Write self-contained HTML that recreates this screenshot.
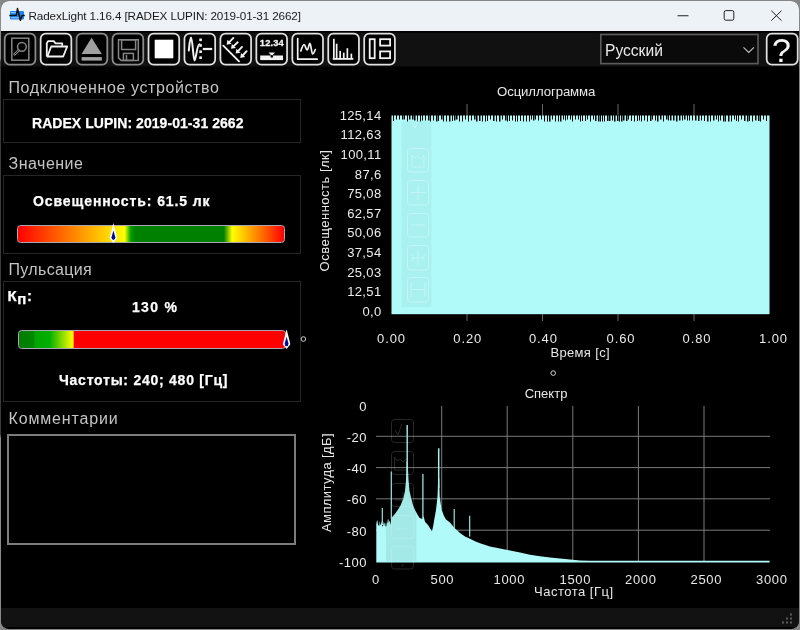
<!DOCTYPE html>
<html><head><meta charset="utf-8">
<style>
html,body{margin:0;padding:0;width:800px;height:630px;overflow:hidden;}
body{background:#858585;}
body{position:relative;font-family:"Liberation Sans",sans-serif;}
.abs{position:absolute;}
#win{position:absolute;left:1px;top:1px;width:798px;height:628px;border-radius:8px;overflow:hidden;background:#000;}
#title{position:absolute;left:0;top:0;width:798px;height:30px;background:#edf2f7;}
.t{position:absolute;white-space:nowrap;line-height:1;}
.hdr{color:#c4c4c4;font-size:16px;}
.bold{color:#fff;font-weight:bold;font-size:14px;-webkit-text-stroke:0.25px #fff;}
.box{position:absolute;border:1px solid #262626;}
.lbl{color:#e6e6e6;font-size:13px;}
.clbl{color:#e8e8e8;font-size:13px;}
</style></head><body>
<div id="root" style="position:absolute;left:0;top:0;width:800px;height:630px;will-change:transform;">
<div class="abs" style="left:0;top:0;width:1px;height:630px;background:linear-gradient(to bottom,#8a8a8a 0px,#8a8a8a 58px,#3a3a3a 62px,#3a3a3a 434px,#8a8a8a 438px,#8a8a8a 630px);"></div>
<div id="win">
  <div id="title"></div>
  <div class="abs" style="left:0;top:606.5px;width:798px;height:19.5px;background:#121212;"></div>
</div>

<!-- title bar content -->
<svg class="abs" style="left:0;top:0" width="800" height="32">
  <!-- app icon -->
  <rect x="10" y="11" width="14" height="8.4" rx="1.2" fill="#1a84f2"/>
  <rect x="11" y="12" width="5" height="1.2" fill="#9fd0ff" opacity="0.8"/>
  <rect x="11" y="17.2" width="9" height="1.2" fill="#9fd0ff" opacity="0.8"/>
  <polyline points="9.3,15.4 16.4,15.2 17.5,8.6 20.4,20.2 22.1,15.4 24.8,15.4" fill="none" stroke="#111" stroke-width="1.5" stroke-linejoin="round"/>
  <!-- min / max / close -->
  <line x1="677.5" y1="15.75" x2="688.5" y2="15.75" stroke="#222" stroke-width="1"/>
  <rect x="724.2" y="10.6" width="9.6" height="9.6" rx="1.6" fill="none" stroke="#222" stroke-width="1"/>
  <path d="M771.3 10.7 L781.5 20.6 M781.5 10.7 L771.3 20.6" stroke="#222" stroke-width="1"/>
</svg>
<div class="t" style="left:28.5px;top:9.8px;font-size:11.7px;color:#1a1a1a;letter-spacing:-0.12px">RadexLight 1.16.4 [RADEX LUPIN: 2019-01-31 2662]</div>

<!-- toolbar -->
<svg class="abs" style="left:0;top:0" width="800" height="70">
  <rect x="1" y="32.8" width="798" height="33.7" fill="#111"/>
  <g fill="#000" stroke-width="1.75">
    <rect x="4.70" y="33.7" width="30.7" height="30.9" rx="5" stroke="#8c8c8c"/>
    <rect x="40.65" y="33.7" width="30.7" height="30.9" rx="5" stroke="#e0e0e0"/>
    <rect x="76.60" y="33.7" width="30.7" height="30.9" rx="5" stroke="#8c8c8c"/>
    <rect x="112.55" y="33.7" width="30.7" height="30.9" rx="5" stroke="#8c8c8c"/>
    <rect x="148.50" y="33.7" width="30.7" height="30.9" rx="5" stroke="#e0e0e0"/>
    <rect x="184.45" y="33.7" width="30.7" height="30.9" rx="5" stroke="#e0e0e0"/>
    <rect x="220.40" y="33.7" width="30.7" height="30.9" rx="5" stroke="#e0e0e0"/>
    <rect x="256.35" y="33.7" width="30.7" height="30.9" rx="5" stroke="#e0e0e0"/>
    <rect x="292.30" y="33.7" width="30.7" height="30.9" rx="5" stroke="#e0e0e0"/>
    <rect x="328.25" y="33.7" width="30.7" height="30.9" rx="5" stroke="#e0e0e0"/>
    <rect x="364.20" y="33.7" width="30.7" height="30.9" rx="5" stroke="#e0e0e0"/>
  </g>
  <!-- search doc -->
  <g fill="none" stroke="#858585" stroke-width="1.5">
    <rect x="11.8" y="38.2" width="17" height="22"/>
    <circle cx="21.9" cy="46.8" r="4.4"/>
    <line x1="18.6" y1="50.3" x2="14.6" y2="54.3" stroke-width="2.6" stroke-linecap="round"/>
    <line x1="18.6" y1="50.3" x2="14.6" y2="54.3" stroke-width="0.8" stroke="#000"/>
  </g>
  <!-- folder -->
  <g fill="none" stroke="#f2f2f2" stroke-width="1.8" stroke-linejoin="round">
    <path d="M46.8 56.6 V43.2 L48.2 41.1 H53.8 L55.4 43.3 H62.2 V45.8"/>
    <path d="M47.4 56.5 L51.2 46.5 H67.2 L63.2 56.5 Z"/>
  </g>
  <!-- eject -->
  <g fill="#a0a0a0">
    <path d="M91.6 37.8 L101.8 54 H81.5 Z"/>
    <rect x="81.6" y="57.1" width="20.2" height="3.5"/>
  </g>
  <!-- save -->
  <g fill="none" stroke="#858585" stroke-width="1.5">
    <path d="M118.5 39.8 H138.3 V60.4 H121 L118.5 57.9 Z"/>
    <rect x="121.6" y="39.8" width="14" height="9.7"/>
    <rect x="123.4" y="53.4" width="10" height="7"/>
    <line x1="126.5" y1="55" x2="126.5" y2="60"/>
  </g>
  <!-- stop -->
  <rect x="154.7" y="39.7" width="18.6" height="18.6" fill="#fff"/>
  <!-- wave -->
  <g fill="none" stroke="#f2f2f2" stroke-width="2" stroke-linecap="round" stroke-linejoin="round">
    <path d="M188.8 50.5 C189.5 44 190 37.5 191 37.5 C192.5 37.5 193.3 60.5 194.5 60.5 C196 60.5 197 44 199.5 44.2"/>
  </g>
  <g fill="#f2f2f2">
    <rect x="199.3" y="38.5" width="2.6" height="2.6"/>
    <rect x="199.3" y="44.2" width="2.6" height="2.6"/>
    <rect x="199.3" y="50.4" width="2.6" height="2.6"/>
    <rect x="199.3" y="56.4" width="2.6" height="2.6"/>
    <rect x="202.8" y="47.9" width="9.4" height="2.2"/>
  </g>
  <!-- arrows -->
  <g stroke="#f2f2f2" stroke-width="1.9" fill="none" stroke-linecap="round">
    <line x1="223.3" y1="45.7" x2="239" y2="61.3"/>
    <line x1="233.4" y1="37.9" x2="229.50" y2="41.80"/><line x1="237.7" y1="42.3" x2="233.90" y2="45.90"/><line x1="242" y1="46.9" x2="238.50" y2="50.70"/><line x1="246.6" y1="51.2" x2="243.10" y2="55.00"/>
  </g>
  <g fill="#f2f2f2"><path d="M226.6 44.7 L231.50 43.80 L227.50 39.80 Z"/><path d="M231 48.8 L235.90 47.90 L231.90 43.90 Z"/><path d="M235.6 53.6 L240.50 52.70 L236.50 48.70 Z"/><path d="M240.2 57.9 L245.10 57.00 L241.10 53.00 Z"/></g>
  <!-- 12.34 -->
  <text x="271.8" y="46.2" font-family="Liberation Sans" font-weight="bold" font-size="9.4" fill="#f2f2f2" stroke="#f2f2f2" stroke-width="0.3" text-anchor="middle" letter-spacing="0.1">12.34</text>
  <path d="M268.5 52.6 H275 L271.8 56 Z" fill="#f2f2f2"/>
  <rect x="260.2" y="55.5" width="22.8" height="4.6" fill="#f2f2f2"/>
  <circle cx="271.8" cy="56.4" r="1.3" fill="#0b0b0b"/>
  <!-- graph -->
  <g fill="none" stroke="#f2f2f2" stroke-width="1.7" stroke-linejoin="round" stroke-linecap="round">
    <path d="M297.7 38.6 V59.2 H317.2"/>
    <path d="M300.8 51 C302 47.5 303 44.6 304 44.6 C305.3 44.6 306 50 307.2 50 C308.4 50 308.9 43.3 309.9 43.3 C311 43.3 311.5 54 312.6 54 C313.7 54 314.5 51.5 315.3 49.6"/>
  </g>
  <!-- histogram -->
  <g fill="#f2f2f2">
    <rect x="332.8" y="58" width="20.5" height="1.8"/>
    <rect x="333" y="38.8" width="1.7" height="20"/>
    <rect x="335.8" y="43.7" width="1.7" height="15"/>
    <rect x="339.3" y="50.9" width="1.7" height="8"/>
    <rect x="342.9" y="52.7" width="1.7" height="6"/>
    <rect x="346.5" y="48.2" width="1.7" height="10"/>
    <rect x="350.5" y="53.6" width="1.7" height="5"/>
  </g>
  <!-- layout -->
  <g fill="none" stroke="#f2f2f2" stroke-width="1.8">
    <rect x="369.7" y="39.2" width="5" height="19"/>
    <rect x="380.1" y="39.2" width="10" height="6.4"/>
    <rect x="380.1" y="51.4" width="10" height="6.8"/>
  </g>
  <!-- language dropdown -->
  <rect x="600.8" y="34.5" width="157.2" height="29.1" fill="#0a0a0a" stroke="#5c5c5c" stroke-width="1.6"/>
  <path d="M743.5 47.3 L748.7 52.5 L753.9 47.3" fill="none" stroke="#bdbdbd" stroke-width="1.2"/>
  <!-- help -->
  <rect x="766.7" y="33.7" width="31" height="30.9" rx="5" fill="#000" stroke="#e0e0e0" stroke-width="1.75"/>
</svg>
<div class="t" style="left:605px;top:42.5px;font-size:15.6px;color:#eaeaea;">Русский</div>
<div class="t" style="left:772px;top:32.5px;font-size:34px;color:#f4f4f4;">?</div>

<!-- left panel -->
<div class="t hdr" style="left:8.5px;top:79.5px;letter-spacing:0.6px">Подключенное устройство</div>
<div class="box" style="left:3px;top:99px;width:296px;height:42px;"></div>
<div class="t bold" style="left:32px;top:115.5px;letter-spacing:0.05px">RADEX LUPIN: 2019-01-31 2662</div>

<div class="t hdr" style="left:8.5px;top:155.5px;letter-spacing:0.5px">Значение</div>
<div class="box" style="left:3px;top:175px;width:296px;height:77px;"></div>
<div class="t bold" style="left:33px;top:194px;letter-spacing:0.9px">Освещенность: 61.5 лк</div>
<div class="abs" style="left:17.3px;top:224.7px;width:266.2px;height:16px;border:1px solid #a9a6b6;border-radius:3.5px;background:linear-gradient(to right,#ff0000 0%,#ffff00 40.1%,#00a000 42.4%,#008000 44.2%,#008000 77.4%,#ffff00 80.5%,#ff0000 100%);"></div>


<div class="t hdr" style="left:8.5px;top:261.5px;letter-spacing:0.35px">Пульсация</div>
<div class="box" style="left:3px;top:281px;width:296px;height:119px;"></div>
<div class="t bold" style="left:7.5px;top:287.5px;font-size:15px;letter-spacing:0.6px">К<span style="position:relative;top:3px">п</span>:</div>
<div class="t bold" style="left:132px;top:299.5px;letter-spacing:1.3px">130 %</div>
<div class="abs" style="left:17.5px;top:330px;width:266px;height:17px;border:1px solid #a9a6b6;border-radius:3.5px;background:linear-gradient(to right,#007a00 0%,#008800 5.5%,#00a400 6%,#00b000 11.5%,#ffff00 20.3%,#ff0000 20.8%,#ff0000 100%);"></div>
<div class="t bold" style="left:59px;top:372.5px;letter-spacing:0.75px">Частоты: 240; 480 [Гц]</div>

<div class="t hdr" style="left:8.5px;top:410.5px;letter-spacing:0.85px">Комментарии</div>
<div class="abs" style="left:7.3px;top:434.3px;width:285px;height:106.5px;border:2px solid #7c7c7c;"></div>

<svg class="abs" style="left:0;top:0" width="800" height="630">
  <path d="M113.4 223 L117.2 238 L113.4 243 L109.6 238 Z" fill="#fff"/>
  <path d="M113.4 230.5 L115.3 237.3 Q115.3 240 113.4 240 Q111.5 240 111.5 237.3 Z" fill="#000a8a"/>
  <path d="M286.6 329.3 L290.4 344.3 L286.6 349 L282.8 344.3 Z" fill="#fff"/>
  <path d="M286.6 336.8 L288.5 343.6 Q288.5 346.3 286.6 346.3 Q284.7 346.3 284.7 343.6 Z" fill="#000a8a"/>
</svg>
<!-- splitter dots -->
<svg class="abs" style="left:0;top:0" width="800" height="630">
  <circle cx="303.4" cy="339" r="2.3" fill="none" stroke="#d0d0d0" stroke-width="1"/>
  <circle cx="553.2" cy="373.1" r="2.3" fill="none" stroke="#d0d0d0" stroke-width="1"/>
</svg>

<!-- oscillogram -->
<svg class="abs" style="left:0;top:0" width="800" height="630">
  <g stroke="#666" stroke-width="1">
    <line x1="467" y1="104" x2="467" y2="321"/>
    <line x1="542.5" y1="104" x2="542.5" y2="321"/>
    <line x1="618" y1="104" x2="618" y2="321"/>
    <line x1="694" y1="104" x2="694" y2="321"/>
  </g>
  <rect x="391.5" y="115.5" width="378" height="198.7" fill="#b0fbfa"/>
  <rect x="393" y="115" width="1" height="6" fill="#000"/><rect x="396" y="115" width="1" height="4.5" fill="#000"/><rect x="399" y="115" width="1" height="4.5" fill="#000"/><rect x="402" y="115" width="1.5" height="4.5" fill="#000"/><rect x="404" y="115" width="1" height="4.5" fill="#000"/><rect x="407" y="115" width="1" height="6.5" fill="#000"/><rect x="409" y="115" width="1.5" height="4.5" fill="#000"/><rect x="412" y="115" width="1.5" height="4.5" fill="#000"/><rect x="414" y="115" width="1.5" height="5.5" fill="#000"/><rect x="417" y="115" width="1" height="6.5" fill="#000"/><rect x="420" y="115" width="1" height="6.5" fill="#000"/><rect x="422" y="115" width="1" height="5.5" fill="#000"/><rect x="425" y="115" width="1" height="5.5" fill="#000"/><rect x="428" y="115" width="1.5" height="5.5" fill="#000"/><rect x="430" y="115" width="1" height="6.5" fill="#000"/><rect x="433" y="115" width="1" height="5.5" fill="#000"/><rect x="436" y="115" width="1.5" height="6.5" fill="#000"/><rect x="438" y="115" width="1" height="6" fill="#000"/><rect x="441" y="115" width="1.5" height="4.5" fill="#000"/><rect x="443" y="115" width="1" height="6.5" fill="#000"/><rect x="446" y="115" width="1" height="6.5" fill="#000"/><rect x="449" y="115" width="1.5" height="6.5" fill="#000"/><rect x="452" y="115" width="1" height="6" fill="#000"/><rect x="454" y="115" width="1.5" height="5.5" fill="#000"/><rect x="456" y="115" width="1.5" height="4.5" fill="#000"/><rect x="459" y="115" width="1" height="6.5" fill="#000"/><rect x="462" y="115" width="1" height="6.5" fill="#000"/><rect x="465" y="115" width="1" height="4.5" fill="#000"/><rect x="468" y="115" width="1" height="6.5" fill="#000"/><rect x="471" y="115" width="1" height="5.5" fill="#000"/><rect x="474" y="115" width="1.5" height="4.5" fill="#000"/><rect x="476" y="115" width="1.5" height="6.5" fill="#000"/><rect x="479" y="115" width="1.5" height="6" fill="#000"/><rect x="482" y="115" width="1" height="6.5" fill="#000"/><rect x="485" y="115" width="1" height="6.5" fill="#000"/><rect x="487" y="115" width="1" height="6" fill="#000"/><rect x="490" y="115" width="1" height="4.5" fill="#000"/><rect x="493" y="115" width="1.5" height="6" fill="#000"/><rect x="496" y="115" width="1" height="6.5" fill="#000"/><rect x="499" y="115" width="1.5" height="6.5" fill="#000"/><rect x="502" y="115" width="1" height="4.5" fill="#000"/><rect x="505" y="115" width="1.5" height="5.5" fill="#000"/><rect x="507" y="115" width="1" height="6.5" fill="#000"/><rect x="509" y="115" width="1" height="6" fill="#000"/><rect x="512" y="115" width="1" height="5.5" fill="#000"/><rect x="515" y="115" width="1" height="6.5" fill="#000"/><rect x="517" y="115" width="1" height="6.5" fill="#000"/><rect x="520" y="115" width="1" height="6" fill="#000"/><rect x="523" y="115" width="1" height="6.5" fill="#000"/><rect x="526" y="115" width="1" height="6.5" fill="#000"/><rect x="529" y="115" width="1" height="6.5" fill="#000"/><rect x="531" y="115" width="1" height="4.5" fill="#000"/><rect x="533" y="115" width="1.5" height="5.5" fill="#000"/><rect x="535" y="115" width="1" height="4.5" fill="#000"/><rect x="538" y="115" width="1" height="5.5" fill="#000"/><rect x="541" y="115" width="1" height="4.5" fill="#000"/><rect x="544" y="115" width="1" height="6.5" fill="#000"/><rect x="547" y="115" width="1" height="6.5" fill="#000"/><rect x="549" y="115" width="1.5" height="6.5" fill="#000"/><rect x="552" y="115" width="1" height="4.5" fill="#000"/><rect x="555" y="115" width="1" height="6.5" fill="#000"/><rect x="558" y="115" width="1" height="6.5" fill="#000"/><rect x="560" y="115" width="1.5" height="6.5" fill="#000"/><rect x="563" y="115" width="1" height="4.5" fill="#000"/><rect x="565" y="115" width="1" height="5.5" fill="#000"/><rect x="567" y="115" width="1" height="4.5" fill="#000"/><rect x="570" y="115" width="1" height="4.5" fill="#000"/><rect x="572" y="115" width="1" height="6.5" fill="#000"/><rect x="575" y="115" width="1" height="4.5" fill="#000"/><rect x="578" y="115" width="1" height="4.5" fill="#000"/><rect x="580" y="115" width="1" height="6.5" fill="#000"/><rect x="582" y="115" width="1" height="6" fill="#000"/><rect x="585" y="115" width="1" height="6" fill="#000"/><rect x="587" y="115" width="1" height="4.5" fill="#000"/><rect x="590" y="115" width="1" height="6.5" fill="#000"/><rect x="593" y="115" width="1" height="4.5" fill="#000"/><rect x="595" y="115" width="1.5" height="6" fill="#000"/><rect x="598" y="115" width="1.5" height="6.5" fill="#000"/><rect x="600" y="115" width="1" height="6.5" fill="#000"/><rect x="602" y="115" width="1" height="6.5" fill="#000"/><rect x="604" y="115" width="1" height="6.5" fill="#000"/><rect x="607" y="115" width="1.5" height="6" fill="#000"/><rect x="609" y="115" width="1.5" height="6" fill="#000"/><rect x="612" y="115" width="1" height="5.5" fill="#000"/><rect x="614" y="115" width="1.5" height="6.5" fill="#000"/><rect x="617" y="115" width="1.5" height="6" fill="#000"/><rect x="619" y="115" width="1" height="6.5" fill="#000"/><rect x="621" y="115" width="1.5" height="6.5" fill="#000"/><rect x="623" y="115" width="1.5" height="5.5" fill="#000"/><rect x="626" y="115" width="1.5" height="6" fill="#000"/><rect x="628" y="115" width="1" height="4.5" fill="#000"/><rect x="631" y="115" width="1" height="6" fill="#000"/><rect x="634" y="115" width="1" height="6.5" fill="#000"/><rect x="637" y="115" width="1" height="6" fill="#000"/><rect x="639" y="115" width="1" height="5.5" fill="#000"/><rect x="641" y="115" width="1" height="6.5" fill="#000"/><rect x="644" y="115" width="1" height="5.5" fill="#000"/><rect x="647" y="115" width="1" height="6.5" fill="#000"/><rect x="650" y="115" width="1.5" height="6" fill="#000"/><rect x="652" y="115" width="1" height="4.5" fill="#000"/><rect x="655" y="115" width="1" height="5.5" fill="#000"/><rect x="657" y="115" width="1.5" height="6.5" fill="#000"/><rect x="660" y="115" width="1.5" height="4.5" fill="#000"/><rect x="663" y="115" width="1" height="6.5" fill="#000"/><rect x="666" y="115" width="1.5" height="4.5" fill="#000"/><rect x="668" y="115" width="1" height="5.5" fill="#000"/><rect x="670" y="115" width="1.5" height="5.5" fill="#000"/><rect x="673" y="115" width="1.5" height="5.5" fill="#000"/><rect x="676" y="115" width="1.5" height="6.5" fill="#000"/><rect x="679" y="115" width="1.5" height="5.5" fill="#000"/><rect x="682" y="115" width="1" height="5.5" fill="#000"/><rect x="684" y="115" width="1.5" height="4.5" fill="#000"/><rect x="687" y="115" width="1" height="5.5" fill="#000"/><rect x="689" y="115" width="1" height="5.5" fill="#000"/><rect x="692" y="115" width="1" height="5.5" fill="#000"/><rect x="695" y="115" width="1.5" height="5.5" fill="#000"/><rect x="698" y="115" width="1.5" height="6" fill="#000"/><rect x="701" y="115" width="1" height="5.5" fill="#000"/><rect x="704" y="115" width="1" height="6" fill="#000"/><rect x="707" y="115" width="1.5" height="6.5" fill="#000"/><rect x="710" y="115" width="1" height="6.5" fill="#000"/><rect x="713" y="115" width="1.5" height="5.5" fill="#000"/><rect x="716" y="115" width="1" height="4.5" fill="#000"/><rect x="718" y="115" width="1" height="6.5" fill="#000"/><rect x="720" y="115" width="1" height="5.5" fill="#000"/><rect x="723" y="115" width="1.5" height="6.5" fill="#000"/><rect x="725" y="115" width="1" height="6.5" fill="#000"/><rect x="728" y="115" width="1.5" height="6.5" fill="#000"/><rect x="731" y="115" width="1" height="6.5" fill="#000"/><rect x="734" y="115" width="1" height="4.5" fill="#000"/><rect x="736" y="115" width="1" height="6" fill="#000"/><rect x="738" y="115" width="1" height="6.5" fill="#000"/><rect x="741" y="115" width="1" height="4.5" fill="#000"/><rect x="744" y="115" width="1.5" height="6" fill="#000"/><rect x="747" y="115" width="1.5" height="6.5" fill="#000"/><rect x="749" y="115" width="1" height="6" fill="#000"/><rect x="752" y="115" width="1" height="6.5" fill="#000"/><rect x="755" y="115" width="1.5" height="5.5" fill="#000"/><rect x="758" y="115" width="1.5" height="6" fill="#000"/><rect x="760" y="115" width="1" height="6.5" fill="#000"/><rect x="763" y="115" width="1" height="4.5" fill="#000"/><rect x="766" y="115" width="1" height="6" fill="#000"/>
  <rect x="401.5" y="121.5" width="30" height="185.5" fill="#000" opacity="0.04"/>
  <g fill="none" stroke="#fff" stroke-width="1" opacity="0.3">
    <rect x="407.5" y="148.5" width="21" height="23.5" rx="3"/>
    <rect x="407.5" y="180.5" width="21" height="24.5" rx="3"/>
    <rect x="407.5" y="213.5" width="21" height="23.5" rx="3"/>
    <rect x="407.5" y="245.5" width="21" height="24.5" rx="3"/>
    <rect x="407.5" y="277.5" width="21" height="24.5" rx="3"/>
    <path d="M412 123 L415 128 L419 117"/>
    <path d="M412 167 V155 L415 158 L418 156 L421 159 L424 155 V167 Z"/>
    <path d="M418 185 V200 M410.5 192.5 H425.5"/>
    <path d="M411 225 H425"/>
    <path d="M418 251 V265 M411 258 H425 M411 254 L414 258 L411 262 M425 254 L422 258 L425 262"/>
    <path d="M411 282 V297 M425 282 V297 M411 289.5 H425"/>
  </g>
</svg>
<div class="t clbl" style="left:497px;top:84.5px;font-size:13.2px;letter-spacing:-0.1px">Осциллограмма</div>
<div class="abs" style="left:320px;top:105.6px;width:61.5px;font-size:13px;color:#ececec;line-height:19.64px;text-align:right;letter-spacing:0.35px;">125,14<br>112,63<br>100,11<br>87,6<br>75,08<br>62,57<br>50,06<br>37,54<br>25,03<br>12,51<br>0,0</div>
<div class="t clbl" style="left:377.0px;top:332px;letter-spacing:0.9px">0.00</div>
<div class="t clbl" style="left:453.3px;top:332px;letter-spacing:0.9px">0.20</div>
<div class="t clbl" style="left:528.9px;top:332px;letter-spacing:0.9px">0.40</div>
<div class="t clbl" style="left:606.5px;top:332px;letter-spacing:0.9px">0.60</div>
<div class="t clbl" style="left:682.5px;top:332px;letter-spacing:0.9px">0.80</div>
<div class="t clbl" style="left:759.0px;top:332px;letter-spacing:0.9px">1.00</div>
<div class="t clbl" style="left:550.4px;top:346px;letter-spacing:0.35px">Время [с]</div>
<div class="clbl" style="position:absolute;white-space:nowrap;line-height:1;left:259.5px;top:204px;width:128px;text-align:center;transform:rotate(-90deg);letter-spacing:0.5px">Освещенность [лк]</div>

<!-- spectrum -->
<div class="t clbl" style="left:524.7px;top:387px;letter-spacing:0px">Спектр</div>
<svg class="abs" style="left:0;top:0" width="800" height="630">
  <g stroke="#7a7a7a" stroke-width="1">
    <line x1="376" y1="436.3" x2="770" y2="436.3"/>
    <line x1="376" y1="467.6" x2="770" y2="467.6"/>
    <line x1="376" y1="498.8" x2="770" y2="498.8"/>
    <line x1="376" y1="530.2" x2="770" y2="530.2"/>
    <line x1="441.7" y1="406" x2="441.7" y2="562"/>
    <line x1="507.2" y1="406" x2="507.2" y2="562"/>
    <line x1="572.8" y1="406" x2="572.8" y2="562"/>
    <line x1="638.4" y1="406" x2="638.4" y2="562"/>
    <line x1="704" y1="406" x2="704" y2="562"/>
  </g>
  <polygon points="376.3,562.5 376.3,524.0 376.8,521.3 377.4,520.0 378.0,524.5 378.6,525.4 379.2,526.2 379.8,520.7 380.4,524.9 381.0,524.5 381.6,520.6 382.2,526.1 382.8,526.8 383.4,521.1 384.0,526.6 384.6,522.5 385.2,523.2 385.8,526.9 386.4,525.7 387.0,520.7 387.6,522.7 388.2,523.4 388.8,522.0 389.4,521.0 390.0,521.9 390.6,524.9 391.0,519.0 391.5,518.0 394.5,514.5 397.7,510.0 400.5,505.5 403.2,499.0 405.0,491.0 406.0,480.0 406.7,462.0 407.7,462.0 408.5,480.0 409.5,491.0 411.4,499.0 413.0,505.0 415.0,510.0 417.5,514.5 419.6,518.0 422.5,519.0 423.5,516.0 425.0,521.7 428.0,525.0 430.5,529.0 432.0,531.5 433.2,526.0 434.2,520.0 436.0,510.0 437.5,497.0 438.2,478.0 439.2,478.0 439.7,497.0 441.7,510.0 444.0,516.0 446.0,519.5 450.0,522.5 454.0,527.5 460.0,533.0 465.0,536.5 469.5,538.5 475.0,541.2 480.0,543.3 490.0,546.4 500.0,548.5 510.0,550.4 520.0,552.6 530.0,554.7 540.0,556.2 550.0,557.5 560.0,558.6 570.0,559.6 580.0,560.5 590.0,560.8 769.6,560.8 769.6,562.5" fill="#b0fbfa"/>
  <line x1="382.3" y1="508" x2="382.3" y2="525" stroke="#a6f2f2" stroke-width="1.1"/><line x1="391.3" y1="471.5" x2="391.3" y2="519" stroke="#a6f2f2" stroke-width="1.2"/><line x1="407.2" y1="425" x2="407.2" y2="476" stroke="#a6f2f2" stroke-width="1.5"/><line x1="422.9" y1="474" x2="422.9" y2="519" stroke="#a6f2f2" stroke-width="1.2"/><line x1="438.7" y1="448.3" x2="438.7" y2="488" stroke="#a6f2f2" stroke-width="1.5"/><line x1="454.2" y1="509" x2="454.2" y2="528" stroke="#a6f2f2" stroke-width="1.1"/><line x1="469.7" y1="515.8" x2="469.7" y2="536.5" stroke="#a6f2f2" stroke-width="1.1"/><line x1="388.2" y1="519.5" x2="388.2" y2="526" stroke="#a6f2f2" stroke-width="1.0"/>
  <rect x="386" y="406" width="30.5" height="155.5" fill="#000" opacity="0.07"/>
  <g fill="none" stroke="#fff" stroke-width="1" opacity="0.15">
    <rect x="391.5" y="419.5" width="22" height="23" rx="3"/>
    <rect x="391.5" y="451.5" width="22" height="23" rx="3"/>
    <rect x="391.5" y="483.5" width="22" height="23" rx="3"/>
    <rect x="391.5" y="515.5" width="22" height="23" rx="3"/>
    <rect x="391.5" y="546.5" width="22" height="22.5" rx="3"/>
    <path d="M395 430 L398 435 L402 423.5"/>
    <path d="M394.5 470 V457 L397 461 L400 459 L403 462 L407 458 V470 Z"/>
    <path d="M395 500 H405 M403 492 V500"/>
    <path d="M396 529 H409"/>
    <circle cx="402.5" cy="565.5" r="0.8"/>
  </g>
</svg>
<div class="abs" style="left:320px;top:391px;width:47px;font-size:13px;color:#ececec;line-height:31.16px;text-align:right;letter-spacing:0.5px;">0<br>-20<br>-40<br>-60<br>-80<br>-100</div>
<div class="t clbl" style="left:372px;top:572.5px">0</div>
<div class="t clbl" style="left:430.5px;top:572.5px;letter-spacing:0.7px">500</div>
<div class="t clbl" style="left:493.5px;top:572.5px;letter-spacing:0.7px">1000</div>
<div class="t clbl" style="left:559.5px;top:572.5px;letter-spacing:0.7px">1500</div>
<div class="t clbl" style="left:625.0px;top:572.5px;letter-spacing:0.7px">2000</div>
<div class="t clbl" style="left:690.5px;top:572.5px;letter-spacing:0.7px">2500</div>
<div class="t clbl" style="left:756.0px;top:572.5px;letter-spacing:0.7px">3000</div>
<div class="t clbl" style="left:534px;top:585px;letter-spacing:0.5px">Частота [Гц]</div>
<div class="clbl" style="position:absolute;white-space:nowrap;line-height:1;left:270.5px;top:475.7px;width:110px;text-align:center;transform:rotate(-90deg);letter-spacing:0.4px">Амплитуда [дБ]</div>

<!-- status bar -->

<svg class="abs" style="left:0;top:0" width="800" height="630">
  <g fill="#5a5a5a">
    <rect x="790" y="613.5" width="2" height="2"/>
    <rect x="786" y="617.5" width="2" height="2"/><rect x="790" y="617.5" width="2" height="2"/>
    <rect x="782" y="621.5" width="2" height="2"/><rect x="786" y="621.5" width="2" height="2"/><rect x="790" y="621.5" width="2" height="2"/>
  </g>
</svg>
</div>
</body></html>
